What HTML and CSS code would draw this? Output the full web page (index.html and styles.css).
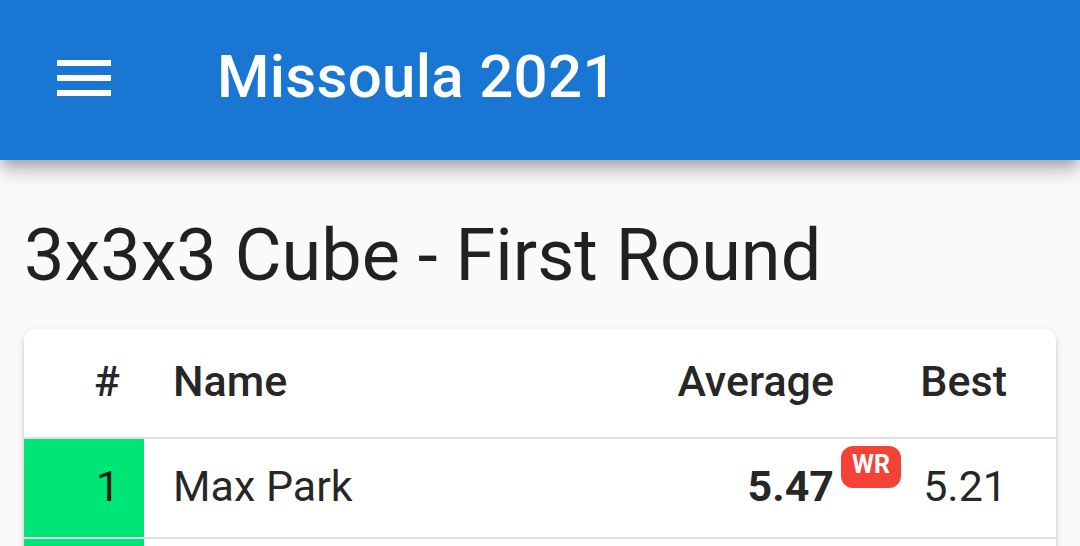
FILE: index.html
```html
<!DOCTYPE html>
<html lang="en">
<head>
<meta charset="utf-8">
<title>Missoula 2021</title>
<link rel="stylesheet" href="styles.css">
</head>
<body>
<header class="appbar">
  <button class="menu-btn" aria-label="menu">
    <svg class="menu-icon" viewBox="0 0 24 24" width="72" height="72"><path d="M3 18h18v-2H3v2zm0-5h18v-2H3v2zm0-7v2h18V6H3z" fill="#fff"/></svg>
  </button>
  <div class="appbar-title">Missoula 2021</div>
</header>
<main class="content">
  <h1 class="round-title">3x3x3 Cube - First Round</h1>
  <div class="card">
    <table class="results">
      <colgroup>
        <col class="col-rank">
        <col class="col-name">
        <col class="col-avg">
        <col class="col-best">
      </colgroup>
      <thead>
        <tr>
          <th class="rank">#</th>
          <th class="name">Name</th>
          <th class="avg">Average</th>
          <th class="best">Best</th>
        </tr>
      </thead>
      <tbody>
        <tr>
          <td class="rank advancing">1</td>
          <td class="name">Max Park</td>
          <td class="avg"><span class="avg-value">5.47<span class="record">WR</span></span></td>
          <td class="best">5.21</td>
        </tr>
        <tr>
          <td class="rank advancing"></td>
          <td class="name"></td>
          <td class="avg"></td>
          <td class="best"></td>
        </tr>
      </tbody>
    </table>
  </div>
</main>
</body>
</html>
```

FILE: styles.css
```css
html, body {
  margin: 0;
  padding: 0;
}
body {
  background: #fafafa;
  font-family: Roboto, "Noto Sans", sans-serif;
  color: rgba(0, 0, 0, 0.87);
  width: 1080px;
  height: 546px;
  overflow: hidden;
}
.appbar {
  position: relative;
  z-index: 2;
  height: 160px;
  box-sizing: border-box;
  padding: 0 0 8px 48px;
  background: #1976d2;
  color: #fff;
  display: flex;
  align-items: center;
  box-shadow: 0 6px 12px -3px rgba(0,0,0,0.2), 0 12px 15px 0 rgba(0,0,0,0.14), 0 3px 30px 0 rgba(0,0,0,0.12);
}
.menu-btn {
  border: 0;
  padding: 0;
  margin: 0 0 -4px 0;
  background: none;
  width: 72px;
  height: 72px;
  display: flex;
}
.menu-icon {
  display: block;
}
.appbar-title {
  margin-left: 97px;
  font-size: 60px;
  font-weight: 500;
  line-height: normal;
  letter-spacing: 0.3px;
}
.content {
  padding: 0 24px;
}
.round-title {
  margin: 54px 0 31px 0;
  font-size: 72px;
  font-weight: 400;
  line-height: 84px;
  color: rgba(0, 0, 0, 0.87);
}
.card {
  background: #fff;
  border-radius: 12px;
  overflow: hidden;
  box-shadow: 0 6px 3px -3px rgba(0,0,0,0.2), 0 3px 3px 0 rgba(0,0,0,0.14), 0 3px 9px 0 rgba(0,0,0,0.12);
}
.results {
  width: 100%;
  border-collapse: collapse;
  table-layout: fixed;
  font-size: 43px;
}
.col-rank { width: 120px; }
.col-avg { width: 300px; }
.col-best { width: 182px; }
.results th,
.results td {
  padding: 0 0 4px 0;
  vertical-align: middle;
  line-height: normal;
  white-space: nowrap;
}
.results th {
  height: 104px;
  font-weight: 500;
  border-bottom: 2px solid #e0e0e0;
}
.results td {
  height: 94px;
  font-weight: 400;
  border-bottom: 2px solid #e0e0e0;
}
.rank {
  text-align: right;
  padding-right: 24px !important;
}
.name {
  text-align: left;
  padding-left: 29px !important;
}
.avg {
  text-align: right;
  padding-right: 40px !important;
}
.best {
  text-align: right;
  padding-right: 49px !important;
}
.advancing {
  background: #00e676;
  border-bottom-color: #e8fdf0 !important;
}
.avg-value {
  position: relative;
  font-weight: 700;
}
.record {
  position: absolute;
  left: 100%;
  top: -15px;
  margin-left: 7px;
  width: 60px;
  height: 42px;
  line-height: 38px;
  border-radius: 12px;
  background: #f44336;
  color: #fff;
  font-size: 25px;
  font-weight: 700;
  text-align: center;
}
```
